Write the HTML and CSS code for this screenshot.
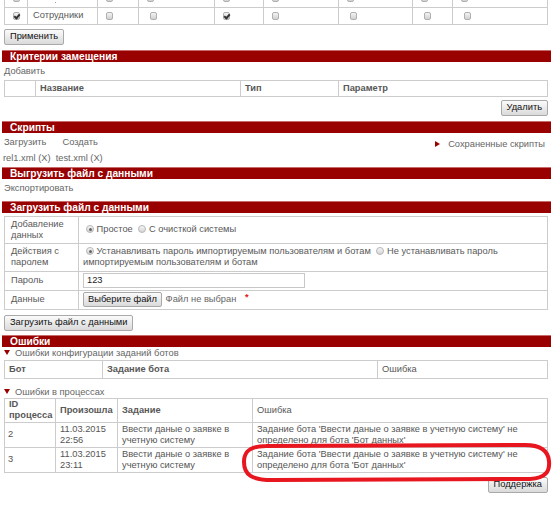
FILE: index.html
```html
<!DOCTYPE html>
<html lang="ru">
<head>
    <meta charset="UTF-8">
    <title>Импорт данных</title>
    <link rel="stylesheet" href="styles.css">
</head>
<body>
    <table class="grid rights">
        <colgroup>
            <col style="width: 23px"><col style="width: 70px"><col style="width: 41px"><col style="width: 76px"><col style="width: 49px"><col style="width: 75px"><col style="width: 74px"><col style="width: 40px"><col>
        </colgroup>
        <tr class="cut">
            <td><span class="cb"></span></td><td class="dot"><span class="pt"></span></td><td><span class="cb"></span></td><td><span class="cb"></span></td><td><span class="cb"></span></td><td><span class="cb"></span></td><td><span class="cb"></span></td><td><span class="cb"></span></td><td><span class="cb"></span></td>
        </tr>
        <tr>
            <td><span class="cb on"></span></td>
            <td class="name">Сотрудники</td>
            <td><span class="cb"></span></td>
            <td class="wide"><span class="cb"></span></td>
            <td><span class="cb on"></span></td>
            <td><span class="cb"></span></td>
            <td class="wide"><span class="cb"></span></td>
            <td class="wide"><span class="cb"></span></td>
            <td class="wide"><span class="cb"></span></td>
        </tr>
    </table>
    <button class="btn">Применить</button>

    <div class="section">Критерии замещения</div>
    <div class="link-row">Добавить</div>
    <table class="grid head-grid">
        <colgroup>
            <col style="width: 31px"><col style="width: 205px"><col style="width: 98px"><col>
        </colgroup>
        <tr>
            <th></th>
            <th>Название</th>
            <th>Тип</th>
            <th>Параметр</th>
        </tr>
    </table>
    <div class="right"><button class="btn near">Удалить</button></div>

    <div class="section">Скрипты</div>
    <div class="scripts">
        <div class="links"><span>Загрузить</span><span>Создать</span></div>
        <div class="saved"><span class="tri-right"></span>Сохраненные скрипты</div>
    </div>
    <div class="files">rel1.xml (X) &nbsp;test.xml (X)</div>

    <div class="section close">Выгрузить файл с данными</div>
    <div class="link-row">Экспортировать</div>

    <div class="section mid">Загрузить файл с данными</div>
    <table class="grid form">
        <colgroup>
            <col style="width: 74px"><col>
        </colgroup>
        <tr class="r2">
            <td class="label">Добавление данных</td>
            <td><span class="rb on"></span> Простое <span class="rb"></span> С очисткой системы</td>
        </tr>
        <tr class="r2 r2b">
            <td class="label">Действия с паролем</td>
            <td><span class="rb on"></span> Устанавливать пароль импортируемым пользователям и ботам <span class="rb"></span> Не устанавливать пароль импортируемым пользователям и ботам</td>
        </tr>
        <tr>
            <td class="label">Пароль</td>
            <td><span class="input">123</span></td>
        </tr>
        <tr>
            <td class="label">Данные</td>
            <td><button class="btn file">Выберите файл</button> <span class="nofile">Файл не выбран</span> <span class="req">*</span></td>
        </tr>
    </table>
    <button class="btn wide-gap">Загрузить файл с данными</button>

    <div class="section mid">Ошибки</div>
    <div class="toggle-title"><span class="tri-down"></span>Ошибки конфигурации заданий ботов</div>
    <table class="grid head-grid cfg">
        <colgroup>
            <col style="width: 98px"><col style="width: 275px"><col>
        </colgroup>
        <tr>
            <th>Бот</th>
            <th>Задание бота</th>
            <th class="plain">Ошибка</th>
        </tr>
    </table>

    <div class="toggle-title gap"><span class="tri-down"></span>Ошибки в процессах</div>
    <table class="grid errors">
        <colgroup>
            <col style="width: 51px"><col style="width: 62px"><col style="width: 135px"><col>
        </colgroup>
        <tr>
            <th>ID процесса</th>
            <th>Произошла</th>
            <th>Задание</th>
            <th class="plain">Ошибка</th>
        </tr>
        <tr>
            <td>2</td>
            <td>11.03.2015 22:56</td>
            <td>Ввести даные о заявке в учетную систему</td>
            <td>Задание бота 'Ввести даные о заявке в учетную систему' не определено для бота 'Бот данных'</td>
        </tr>
        <tr>
            <td>3</td>
            <td>11.03.2015 23:11</td>
            <td>Ввести даные о заявке в учетную систему</td>
            <td>Задание бота 'Ввести даные о заявке в учетную систему' не определено для бота 'Бот данных'</td>
        </tr>
    </table>
    <div class="right"><button class="btn">Поддержка</button></div>

    <svg class="mark" width="320" height="50" viewBox="0 0 320 50">
        <path d="M 26 6 C 9 6, 4 12, 4 22 C 4 35, 12 40, 32 40 L 290 39 C 306 38, 310 31, 309 21 C 308 10, 300 5, 285 5 L 26 6" fill="none" stroke="#e8161e" stroke-width="4" stroke-linejoin="round"/>
    </svg>
</body>
</html>
```

FILE: styles.css
```css
* {
    box-sizing: border-box;
}

body {
    margin: 0;
    padding: 0 12px 0 4px;
    position: relative;
    font-family: 'Liberation Sans', Arial, sans-serif;
    font-size: 9.3px;
    line-height: 11px;
    color: #595959;
    background: #fff;
}

.grid {
    width: 100%;
    border-collapse: collapse;
    table-layout: fixed;
}

.grid td,
.grid th {
    border: 1px solid #ccc;
    padding: 0 4px;
    text-align: left;
    vertical-align: middle;
}

.grid th {
    font-weight: bold;
    color: #585858;
}

.grid th.plain {
    font-weight: normal;
}

/* top rights table */
.rights {
    margin-top: -10px;
}

.rights tr {
    height: 17px;
}

.rights .cut td {
    border-top: none;
}

.rights td {
    padding-left: 8px;
    line-height: 9px;
}

.rights td.wide {
    padding-left: 11px;
}

.rights td.name {
    padding-left: 5px;
}

.rights td.dot {
    padding-left: 27px;
}

.pt {
    display: inline-block;
    width: 1px;
    height: 1px;
    background: #999;
    vertical-align: -2px;
}

.cb {
    display: inline-block;
    width: 7px;
    height: 8px;
    border: 1px solid #b0b0b0;
    border-radius: 2px;
    background: linear-gradient(#f4f4f4, #d0d0d0);
    vertical-align: middle;
    position: relative;
}

.cb.on::after {
    content: '';
    position: absolute;
    left: 1px;
    top: 0;
    width: 2px;
    height: 4px;
    border-right: 2px solid #333;
    border-bottom: 2px solid #333;
    transform: rotate(40deg);
}

.rb {
    display: inline-block;
    width: 8px;
    height: 8px;
    border: 1px solid #b8b8b8;
    border-radius: 50%;
    background: linear-gradient(#f6f6f6, #d4d4d4);
    vertical-align: -1px;
    position: relative;
    margin-left: 3px;
}

.rb.on::after {
    content: '';
    position: absolute;
    left: 1.5px;
    top: 1.5px;
    width: 3px;
    height: 3px;
    border-radius: 50%;
    background: #666;
}

.btn {
    font-family: 'Liberation Sans', Arial, sans-serif;
    font-size: 9.3px;
    line-height: 11px;
    color: #111;
    padding: 1px 5px;
    height: 16px;
    border: 1px solid #a9a9a9;
    border-radius: 2px;
    background: linear-gradient(#fbfbfb, #dadada);
    margin: 4px 0 0;
    display: block;
}

.btn.near {
    margin-top: 3px;
}

.btn.wide-gap {
    margin-top: 5px;
}

.right {
    display: flex;
    justify-content: flex-end;
}

.section {
    margin: 5px -3px 0 -2px;
    height: 12px;
    padding-left: 8px;
    background: #990000;
    border-top: 1px solid #c86a6a;
    color: #fff;
    font-weight: bold;
    font-size: 10.2px;
    line-height: 11px;
}

.section.close {
    margin-top: 3px;
}

.section.mid {
    margin-top: 4px;
}

.link-row {
    padding-top: 4px;
    height: 18px;
    color: #666;
}

.head-grid th {
    height: 16px;
}

.head-grid.cfg th {
    height: 18px;
}

.scripts {
    display: flex;
    justify-content: space-between;
    padding-top: 4px;
    height: 19px;
}

.links span {
    margin-right: 16px;
    color: #666;
}

.saved {
    color: #666;
    margin-right: 3px;
    padding-top: 2px;
}

.tri-right {
    display: inline-block;
    width: 0;
    height: 0;
    border-top: 3px solid transparent;
    border-bottom: 3px solid transparent;
    border-left: 5px solid #990000;
    margin-right: 8px;
    vertical-align: 0;
}

.files {
    height: 12px;
    padding-top: 1px;
    margin-left: -1px;
    color: #666;
}

.form {
    margin-top: 3px;
}

.form td {
    height: 19px;
    padding: 1px 4px;
}

.form .r2 td {
    height: 27px;
}

.form .r2b td {
    height: 28px;
}

.form td.label {
    padding-left: 6px;
}

.input {
    display: block;
    width: 222px;
    height: 15px;
    border: 1px solid #c8c8c8;
    padding: 1px 3px;
    color: #222;
}

.btn.file {
    display: inline-block;
    margin: 0;
    height: 15px;
    padding: 1px 4px;
}

.nofile {
    color: #666;
    margin-left: 1px;
}

.req {
    color: #e02020;
    font-weight: bold;
    margin-left: 6px;
    vertical-align: 2px;
}

.toggle-title {
    padding-top: 1px;
    height: 13px;
    color: #666;
}

.toggle-title.gap {
    padding-top: 8px;
    height: 19px;
}

.tri-down {
    display: inline-block;
    width: 0;
    height: 0;
    border-left: 3px solid transparent;
    border-right: 3px solid transparent;
    border-top: 5px solid #990000;
    margin-right: 5px;
    vertical-align: 1px;
}

.errors tr {
    height: 24px;
}

.errors td {
    color: #555;
    padding: 1px 4px;
}

.errors td:first-child {
    padding-left: 3px;
}

.mark {
    position: absolute;
    left: 240px;
    top: 440px;
}
```
